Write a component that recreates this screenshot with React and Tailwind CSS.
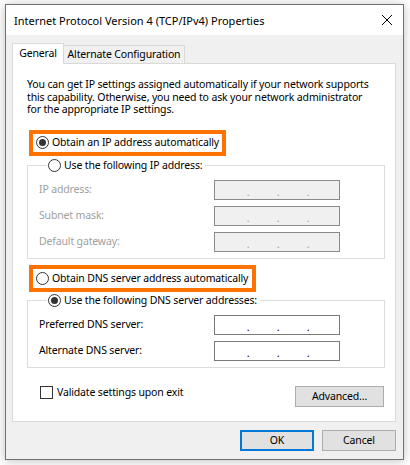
import React from 'react';

const FONT = 'font-["Segoe_UI","Noto_Sans",sans-serif]';

function Radio({ checked }) {
  return (
    <span className="w-[13px] h-[13px] rounded-full border border-[#333333] bg-white flex items-center justify-center flex-shrink-0">
      {checked && <span className="w-[7px] h-[7px] rounded-full bg-[#333333]" />}
    </span>
  );
}

function IpField({ disabled }) {
  return (
    <div
      className={`w-[126px] h-[20px] border flex items-end pb-[3px] pl-[18px] ${
        disabled ? 'bg-[#f0f0f0] border-[#8a8a8a] text-[#a0a0a0]' : 'bg-white border-[#7a7a7a] text-black'
      }`}
    >
      {[0, 1, 2].map(i => (
        <span key={i} className="w-[30px] text-center leading-[8px]">.</span>
      ))}
    </div>
  );
}

function Row({ label, disabled }) {
  return (
    <div className="flex items-center h-[20px]">
      <span className={`w-[175px] whitespace-nowrap ${disabled ? 'text-[#a0a0a0]' : 'text-black'}`}>{label}</span>
      <IpField disabled={disabled} />
    </div>
  );
}

export default function App() {
  return (
    <div className={`w-[410px] h-[465px] bg-white pt-[4px] pl-[5px] ${FONT} text-[10.5px] leading-[13px] tracking-[-0.15px] text-black`}>
      {/* Window */}
      <div className="w-[399px] h-[456px] border border-[#707070] bg-[#f0f0f0] flex flex-col shadow-[0_1px_10px_rgba(0,0,0,0.25)]">
        {/* Title bar */}
        <div className="h-[30px] bg-white flex items-center justify-between pl-[8px] pr-[10px] flex-shrink-0">
          <span className="text-[11px] tracking-normal whitespace-nowrap">Internet Protocol Version 4 (TCP/IPv4) Properties</span>
          <svg width="12" height="12" viewBox="0 0 12 12">
            <path d="M1 1 L11 11 M11 1 L1 11" stroke="#000" strokeWidth="1" />
          </svg>
        </div>

        {/* Body */}
        <div className="flex-1 pl-[6px] pr-[7px] pt-[8px] flex flex-col">
          {/* Tabs */}
          <div className="flex items-end h-[20px] whitespace-nowrap">
            <div className="relative z-10 -mb-px h-[21px] w-[52px] bg-white border border-b-0 border-[#d9d9d9] flex items-center justify-center pb-[2px]">
              General
            </div>
            <div className="h-[18px] w-[121px] bg-[#f0f0f0] border border-b-0 border-l-0 border-[#d9d9d9] flex items-center justify-center">
              Alternate Configuration
            </div>
          </div>

          {/* Panel */}
          <div className="w-[384px] h-[359px] bg-white border border-[#d9d9d9] pl-[14px] pr-[10px] pt-[14px] flex flex-col">
            <p className="whitespace-nowrap leading-[12.5px]">
              You can get IP settings assigned automatically if your network supports<br />
              this capability. Otherwise, you need to ask your network administrator<br />
              for the appropriate IP settings.
            </p>

            <div className="mt-[14px] ml-[2px] w-[197px] h-[26px] border-[4px] border-[#fe7300] flex items-center pl-[3px] gap-[3px] whitespace-nowrap">
              <Radio checked />
              <span>Obtain an IP address automatically</span>
            </div>

            <fieldset className="mt-[3px] border border-[#dcdcdc] pl-[11px] pt-[7px] pb-[6px] flex flex-col gap-[6px]">
              <legend className="ml-[8px] pl-[1px] pr-[3px] h-[14px] flex items-center gap-[3px] whitespace-nowrap">
                <Radio />
                <span>Use the following IP address:</span>
              </legend>
              <Row label="IP address:" disabled />
              <Row label="Subnet mask:" disabled />
              <Row label="Default gateway:" disabled />
            </fieldset>

            <div className="mt-[6px] ml-[2px] w-[227px] h-[27px] border-[4px] border-[#fe7300] flex items-center pl-[3px] gap-[3px] whitespace-nowrap">
              <Radio />
              <span>Obtain DNS server address automatically</span>
            </div>

            <fieldset className="mt-[2px] border border-[#dcdcdc] pl-[11px] pt-[7px] pb-[6px] flex flex-col gap-[6px]">
              <legend className="ml-[8px] pl-[1px] pr-[3px] h-[14px] flex items-center gap-[3px] whitespace-nowrap">
                <Radio checked />
                <span>Use the following DNS server addresses:</span>
              </legend>
              <Row label="Preferred DNS server:" />
              <Row label="Alternate DNS server:" />
            </fieldset>

            <div className="mt-[18px] flex items-start justify-between pl-[13px] pr-[1px]">
              <div className="flex items-center gap-[4px] h-[13px] whitespace-nowrap">
                <span className="w-[13px] h-[13px] border border-[#333333] bg-white" />
                <span>Validate settings upon exit</span>
              </div>
              <button className="w-[89px] h-[21px] bg-[#e1e1e1] border border-[#adadad] flex items-center justify-center">
                Advanced...
              </button>
            </div>
          </div>

          {/* Footer buttons */}
          <div className="flex justify-end gap-[8px] mt-[8px]">
            <button className="w-[74px] h-[21px] bg-[#e1e1e1] border-2 border-[#0078d7] flex items-center justify-center">
              OK
            </button>
            <button className="w-[74px] h-[21px] bg-[#e1e1e1] border border-[#adadad] flex items-center justify-center">
              Cancel
            </button>
          </div>
        </div>
      </div>
    </div>
  );
}
